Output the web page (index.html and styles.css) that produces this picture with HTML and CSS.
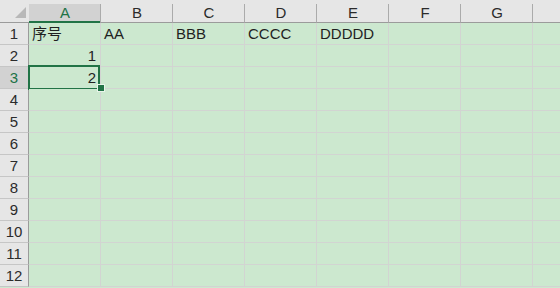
FILE: index.html
```html
<!DOCTYPE html>
<html lang="zh-CN">
<head>
    <meta charset="UTF-8">
    <title>Sheet1</title>
    <link rel="stylesheet" href="styles.css">
</head>
<body>
    <div class="sheet">
        <div class="corner"><div class="corner-tri"></div></div>
        <div class="col-head selected">A</div>
        <div class="col-head">B</div>
        <div class="col-head">C</div>
        <div class="col-head">D</div>
        <div class="col-head">E</div>
        <div class="col-head">F</div>
        <div class="col-head">G</div>
        <div class="col-head"></div>

        <div class="row-head">1</div>
        <div class="cell">序号</div>
        <div class="cell">AA</div>
        <div class="cell">BBB</div>
        <div class="cell">CCCC</div>
        <div class="cell">DDDDD</div>
        <div class="cell"></div>
        <div class="cell"></div>
        <div class="cell"></div>

        <div class="row-head">2</div>
        <div class="cell num">1</div>
        <div class="cell"></div>
        <div class="cell"></div>
        <div class="cell"></div>
        <div class="cell"></div>
        <div class="cell"></div>
        <div class="cell"></div>
        <div class="cell"></div>

        <div class="row-head selected">3</div>
        <div class="cell num active">2<span class="fill-handle"></span></div>
        <div class="cell"></div>
        <div class="cell"></div>
        <div class="cell"></div>
        <div class="cell"></div>
        <div class="cell"></div>
        <div class="cell"></div>
        <div class="cell"></div>
    </div>
    <script>
        // empty rows 4..12
        const sheet = document.querySelector(".sheet");
        for (let r = 4; r <= 12; r++) {
            const head = document.createElement("div");
            head.className = "row-head";
            head.textContent = r;
            sheet.appendChild(head);
            for (let c = 0; c < 8; c++) {
                const cell = document.createElement("div");
                cell.className = "cell";
                sheet.appendChild(cell);
            }
        }
    </script>
</body>
</html>
```

FILE: styles.css
```css
body {
    margin: 0;
    overflow: hidden;
    background-color: #cce8cf;
    font-family: "Liberation Sans", "Noto Sans CJK SC", sans-serif;
    font-size: 15px;
    color: #1f1f1f;
}

.sheet {
    display: grid;
    grid-template-columns: 29px repeat(8, 72px);
    grid-auto-rows: 22px;
    grid-template-rows: 23px;
    background-color: #e6e6e6;
}

.corner {
    display: flex;
    align-items: flex-end;
    justify-content: flex-end;
    padding: 0 3px 4px 0;
    background-color: #e6e6e6;
    border-bottom: 1px solid #9b9b9b;
    box-sizing: border-box;
}

.corner-tri {
    width: 11px;
    height: 11px;
    background-color: #b8b8b8;
    clip-path: polygon(100% 0, 100% 100%, 0 100%);
}

.col-head {
    display: flex;
    align-items: flex-end;
    justify-content: center;
    margin-top: 4px;
    margin-left: -1px;
    padding-bottom: 2px;
    box-sizing: border-box;
    background-color: #e6e6e6;
    border-left: 1px solid #ababab;
    border-bottom: 1px solid #9b9b9b;
    color: #2b2b2b;
    line-height: 15px;
}

.col-head.selected {
    margin-left: 0;
    border-left: none;
    background-color: #d2d2d2;
    border-bottom: 2px solid #217346;
    padding-bottom: 1px;
    color: #217346;
}

.row-head {
    display: flex;
    align-items: flex-end;
    justify-content: center;
    padding-bottom: 3px;
    box-sizing: border-box;
    background-color: #e6e6e6;
    border-right: 1px solid #9b9b9b;
    border-bottom: 1px solid #c6c6c6;
    color: #2b2b2b;
    line-height: 15px;
}

.row-head.selected {
    background-color: #d2d2d2;
    color: #217346;
}

.cell {
    position: relative;
    display: flex;
    align-items: flex-end;
    padding: 0 3px 3px;
    box-sizing: border-box;
    background-color: #cce8cf;
    border-right: 1px solid #d2d4d2;
    border-bottom: 1px solid #d2d4d2;
    line-height: 15px;
    white-space: nowrap;
}

.cell.num {
    justify-content: flex-end;
    padding-right: 4px;
}

.cell.active::after {
    content: "";
    position: absolute;
    left: -1px;
    top: -2px;
    width: 72px;
    height: 25px;
    box-sizing: border-box;
    border: 2px solid #217346;
}

.fill-handle {
    position: absolute;
    left: 68px;
    top: 17px;
    width: 6px;
    height: 6px;
    background-color: #217346;
    border: 1px solid #e8f4ea;
    z-index: 1;
}
```
